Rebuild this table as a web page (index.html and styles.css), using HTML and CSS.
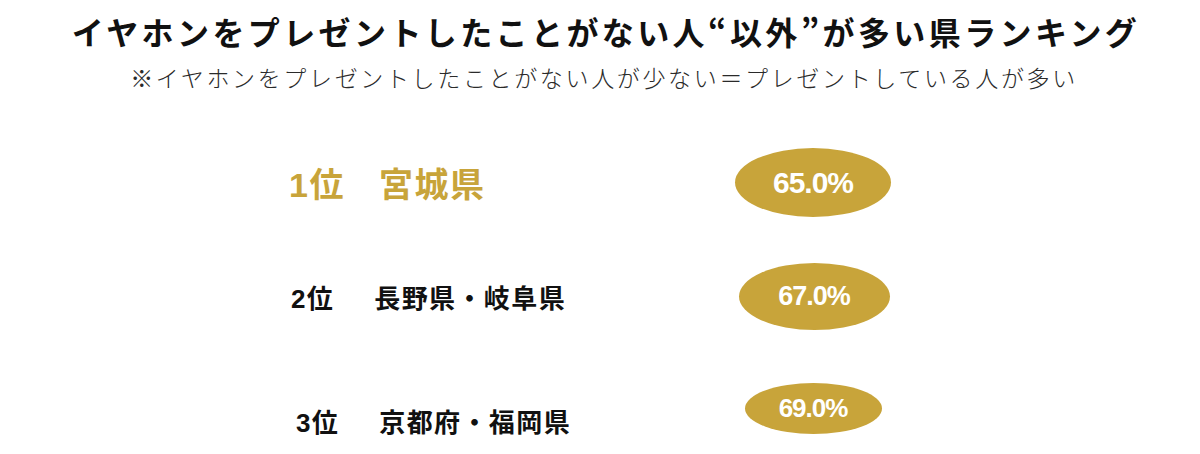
FILE: index.html
```html
<!DOCTYPE html>
<html lang="ja">
<head>
<meta charset="utf-8">
<link rel="stylesheet" href="styles.css">
</head>
<body>
<main class="page">
  <header class="header">
    <h1 class="title">イヤホンをプレゼントしたことがない人“以外”が多い県ランキング</h1>
    <p class="subtitle">※イヤホンをプレゼントしたことがない人が少ない＝プレゼントしている人が多い</p>
  </header>
  <section class="ranking">
    <div class="row row-1">
      <div class="label"><span class="rank">1位</span><span class="pref">宮城県</span></div>
      <div class="pill-cell"><div class="pill">65.0%</div></div>
    </div>
    <div class="row row-2">
      <div class="label"><span class="rank">2位</span><span class="pref">長野県・岐阜県</span></div>
      <div class="pill-cell"><div class="pill">67.0%</div></div>
    </div>
    <div class="row row-3">
      <div class="label"><span class="rank">3位</span><span class="pref">京都府・福岡県</span></div>
      <div class="pill-cell"><div class="pill">69.0%</div></div>
    </div>
  </section>
</main>
</body>
</html>
```

FILE: styles.css
```css
* { box-sizing: border-box; }
html, body {
  margin: 0;
  padding: 0;
  background: #ffffff;
}
body {
  width: 1200px;
  height: 454px;
  overflow: hidden;
  font-family: "Noto Sans CJK JP", "Noto Sans", sans-serif;
  color: #111;
}
.page {
  display: flex;
  flex-direction: column;
}
.header {
  display: flex;
  flex-direction: column;
  align-items: center;
  padding-top: 10px;
}
.title {
  margin: 0;
  font-size: 32px;
  line-height: 42px;
  font-weight: 700;
  letter-spacing: 3.4px;
  color: #111;
  padding-left: 12px;
}
.subtitle {
  margin: 10px 0 0;
  font-size: 23px;
  line-height: 30px;
  font-weight: 300;
  letter-spacing: 2.65px;
  color: #2a2a2a;
  padding-left: 8px;
}
.ranking {
  display: flex;
  flex-direction: column;
  margin-left: 289px;
  margin-top: 56px;
}
.row {
  display: grid;
  grid-template-columns: 424px 200px;
  align-items: center;
}
.label {
  display: flex;
  align-items: center;
  font-weight: 700;
  font-family: "Liberation Sans", "Noto Sans CJK JP", sans-serif;
  color: #111;
}
.rank, .pref { white-space: nowrap; }
.pill-cell {
  display: flex;
  justify-content: center;
}
.pill {
  display: flex;
  align-items: center;
  justify-content: center;
  border-radius: 50%;
  background: #c8a43a;
  color: #ffffff;
  font-family: "Liberation Sans", "Noto Sans", sans-serif;
  font-weight: 700;
  letter-spacing: -1px;
}
.row-1 .label {
  font-size: 34px;
  gap: 34px;
  color: #c8a43a;
  letter-spacing: 1.5px;
}
.row-1 .pill {
  width: 156px;
  height: 69px;
  font-size: 30px;
}
.row-2 { margin-top: 46px; }
.row-2 .label {
  font-size: 26px;
  gap: 40px;
  padding-left: 2px;
  letter-spacing: 1.4px;
}
.row-2 .pill {
  width: 151px;
  height: 67px;
  font-size: 27px;
  margin-left: 2px;
}
.row-3 { margin-top: 48px; }
.row-3 .label {
  font-size: 26px;
  gap: 40px;
  padding-left: 7px;
  padding-top: 24px;
  letter-spacing: 1.4px;
}
.row-3 .pill {
  width: 137px;
  height: 51px;
  font-size: 26px;
}
```
